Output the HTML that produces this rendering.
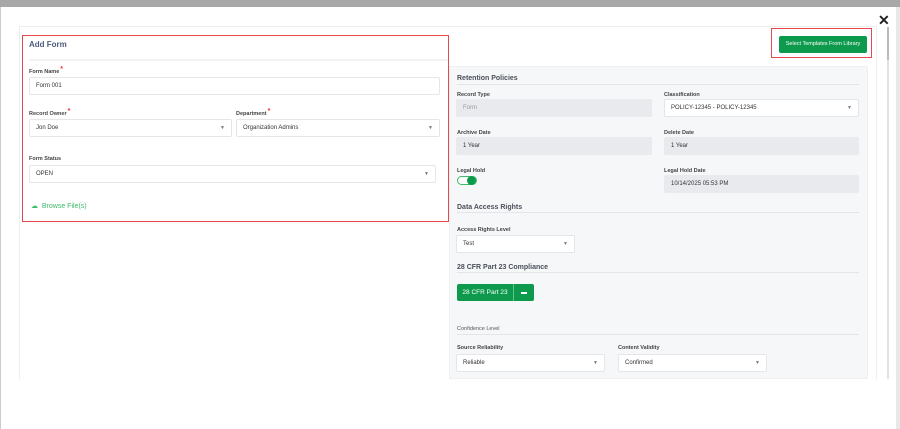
<!DOCTYPE html>
<html><head><style>
*{box-sizing:border-box;margin:0;padding:0}
body{width:900px;height:429px;background:#fff;position:relative;overflow:hidden;font-family:"Liberation Sans",sans-serif;color:#333}
.a{position:absolute}
.lbl{position:absolute;font-size:5.5px;font-weight:bold;color:#444}
.req{color:#e33;font-size:7px;position:relative;top:-2px;margin-left:1px}
.inp{position:absolute;height:18px;border:1px solid #e4e6ea;border-radius:2px;background:#fff;font-size:6px;padding-left:6px;line-height:16px;color:#333}
.gr{background:#e8eaed;border-color:#e8eaed}
.car{position:absolute;right:6px;top:0;font-size:5px;color:#777}
.h{position:absolute;font-size:7px;font-weight:bold;color:#4a4f5a}
.hl{position:absolute;height:1px;background:#e3e5e8}
</style></head><body>
<div class="a" style="left:0;top:0;width:900px;height:7px;background:#a8a8a8"></div>
<div class="a" style="left:0;top:7px;width:1px;height:422px;background:#ccc"></div>
<div class="a" style="left:896px;top:7px;width:4px;height:422px;background:#e8e8e8"></div>
<div class="a" style="left:878px;top:12px;font-size:14px;font-weight:bold;color:#222">✕</div>
<div class="a" style="left:887px;top:27px;width:2px;height:352px;background:#e2e2e2"></div>
<div class="a" style="left:887px;top:27px;width:2px;height:33px;background:#bbb"></div>
<!-- card -->
<div class="a" style="left:19px;top:26px;width:858px;height:360px;border:1px solid #eceef0;border-bottom:none"></div>
<div class="a" style="left:19px;top:379px;width:860px;height:50px;background:#fff"></div>
<div class="a" style="left:29px;top:59px;width:420px;height:2px;background:#f2f3f5"></div>
<!-- right panel -->
<div class="a" style="left:449px;top:66px;width:419px;height:313px;background:#f6f7f9;border:1px solid #eef0f2"></div>
<!-- left box -->
<div class="a" style="left:22px;top:35px;width:427px;height:187px;border:1px solid #e8474e"></div>
<div class="a" style="left:29px;top:40px;font-size:8px;font-weight:bold;color:#4e5b7c">Add Form</div>
<div class="lbl" style="left:29px;top:68px">Form Name<span class="req">*</span></div>
<div class="inp" style="left:29px;top:77px;width:411px">Form 001</div>
<div class="lbl" style="left:29px;top:110px">Record Owner<span class="req">*</span></div>
<div class="inp" style="left:29px;top:119px;width:203px">Jon Doe<span class="car">▼</span></div>
<div class="lbl" style="left:236px;top:110px">Department<span class="req">*</span></div>
<div class="inp" style="left:236px;top:119px;width:204px">Organization Admins<span class="car">▼</span></div>
<div class="lbl" style="left:29px;top:156px">Form Status</div>
<div class="inp" style="left:29px;top:165px;width:407px">OPEN<span class="car">▼</span></div>
<div class="a" style="left:31px;top:202px;font-size:7px;color:#3dbb6a">☁ &nbsp;Browse File(s)</div>
<!-- button -->
<div class="a" style="left:771px;top:28px;width:101px;height:30px;border:1px solid #e8474e"></div>
<div class="a" style="left:779px;top:36px;width:88px;height:17px;background:#0e9a4c;border-radius:2px;color:#fff;font-size:5.5px;text-align:center;line-height:17px">Select Templates From Library</div>
<!-- retention -->
<div class="h" style="left:457px;top:75px">Retention Policies</div>
<div class="hl" style="left:457px;top:84px;width:402px"></div>
<div class="lbl" style="left:457px;top:92px">Record Type</div>
<div class="inp gr" style="left:456px;top:99px;width:196px;color:#999">Form</div>
<div class="lbl" style="left:664px;top:92px">Classification</div>
<div class="inp" style="left:664px;top:99px;width:195px">POLICY-12345 - POLICY-12345<span class="car">▼</span></div>
<div class="lbl" style="left:457px;top:130px">Archive Date</div>
<div class="inp gr" style="left:456px;top:137px;width:196px">1 Year</div>
<div class="lbl" style="left:664px;top:130px">Delete Date</div>
<div class="inp gr" style="left:664px;top:137px;width:195px">1 Year</div>
<div class="lbl" style="left:457px;top:168px">Legal Hold</div>
<div class="a" style="left:457px;top:176px;width:20px;height:9px;border:1px solid #3dbb6a;border-radius:5px;background:#fff"></div>
<div class="a" style="left:467px;top:176px;width:9px;height:9px;border-radius:50%;background:#0e9a4c"></div>
<div class="lbl" style="left:664px;top:168px">Legal Hold Date</div>
<div class="inp gr" style="left:664px;top:175px;width:195px">10/14/2025 05:53 PM</div>
<div class="h" style="left:457px;top:204px">Data Access Rights</div>
<div class="hl" style="left:457px;top:212px;width:402px"></div>
<div class="lbl" style="left:457px;top:227px">Access Rights Level</div>
<div class="inp" style="left:456px;top:235px;width:119px">Test<span class="car">▼</span></div>
<div class="h" style="left:457px;top:264px">28 CFR Part 23 Compliance</div>
<div class="hl" style="left:457px;top:272px;width:402px"></div>
<div class="a" style="left:457px;top:284px;width:77px;height:17px;background:#0e9a4c;border-radius:2px"></div>
<div class="a" style="left:457px;top:284px;width:57px;height:17px;color:#fff;font-size:6.5px;text-align:center;line-height:17px;border-right:1px solid #5fc48a">28 CFR Part 23</div>
<div class="a" style="left:521px;top:292px;width:6px;height:1.5px;background:#fff"></div>
<div class="a" style="left:457px;top:326px;font-size:5.5px;color:#555">Confidence Level</div>
<div class="hl" style="left:457px;top:334px;width:402px"></div>
<div class="lbl" style="left:457px;top:345px">Source Reliability</div>
<div class="inp" style="left:456px;top:354px;width:149px">Reliable<span class="car">▼</span></div>
<div class="lbl" style="left:618px;top:345px">Content Validity</div>
<div class="inp" style="left:618px;top:354px;width:149px">Confirmed<span class="car">▼</span></div>
</body></html>
